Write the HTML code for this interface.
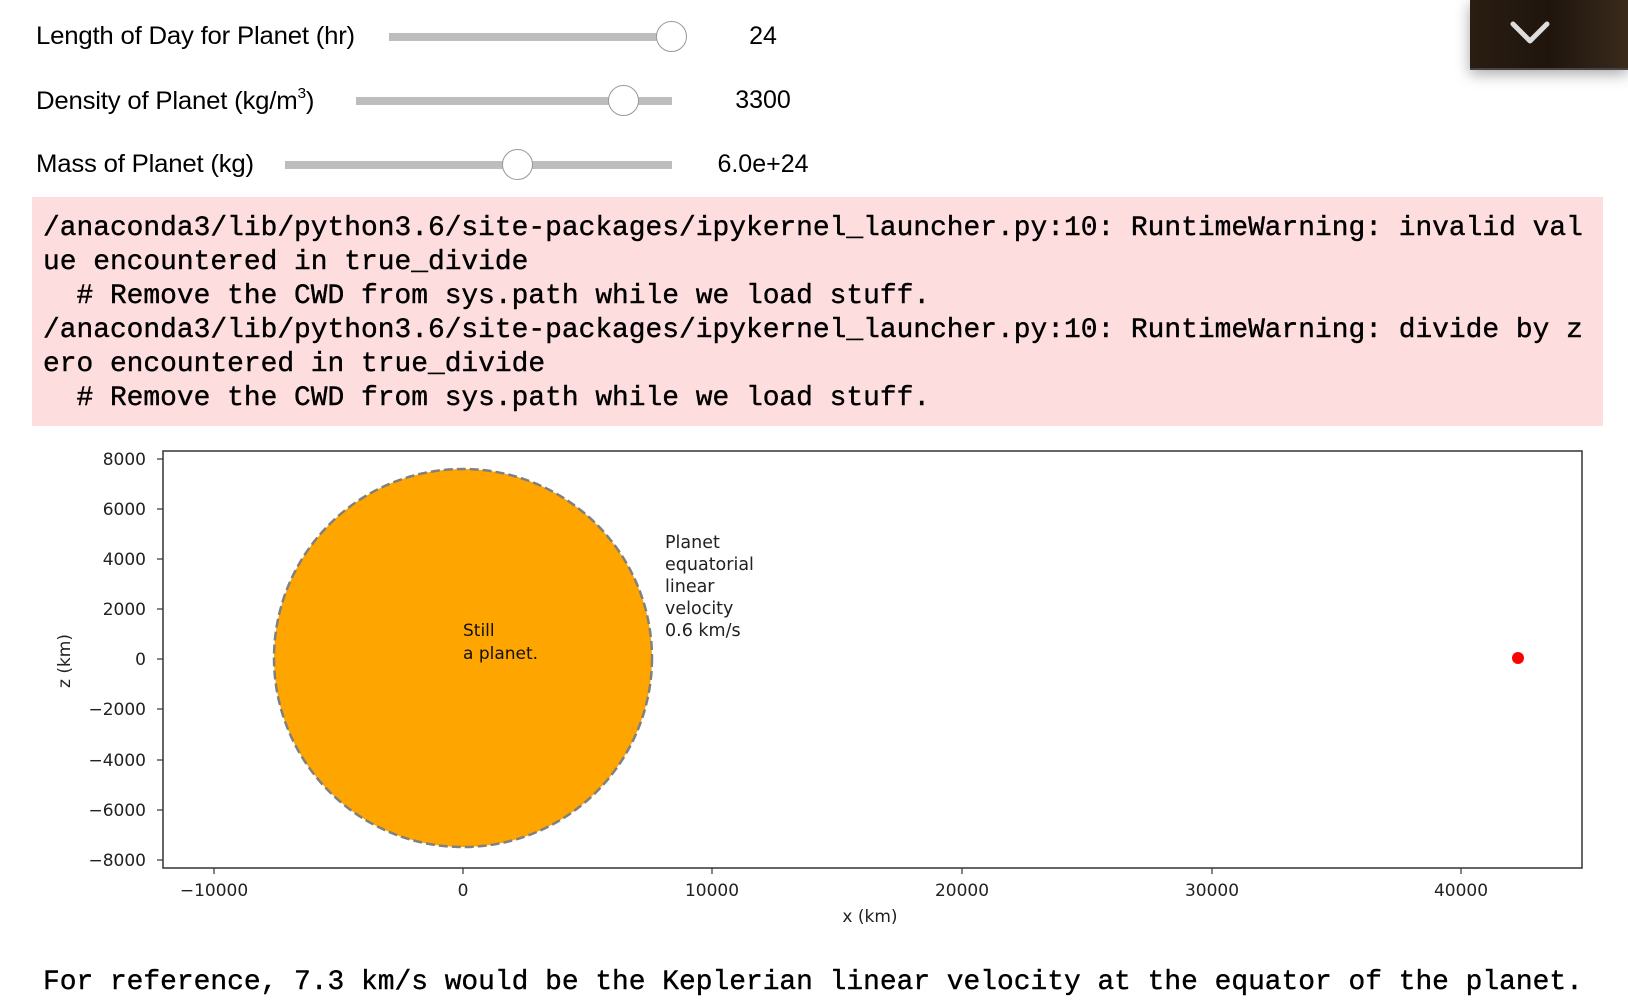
<!DOCTYPE html>
<html><head><meta charset="utf-8"><style>
html,body{margin:0;padding:0;background:#fff;width:1628px;height:1008px;overflow:hidden;position:relative}
.lbl{position:absolute;font-family:"Liberation Sans",Arial,sans-serif;font-size:25px;color:#000;transform:scaleX(1.03);transform-origin:left center;letter-spacing:-0.2px}
.val{position:absolute;font-family:"Liberation Sans",Arial,sans-serif;font-size:25px;color:#000;width:120px;text-align:center}
.track{position:absolute;height:8px;background:#bdbdbd}
.knob{position:absolute;width:29px;height:29px;border-radius:50%;background:#fff;border:1.5px solid #999}
.warn{position:absolute;left:32px;top:197px;width:1571px;height:229px;background:#fddddd}
.mono{position:absolute;font-family:"Liberation Mono","Courier New",monospace;font-size:27.9px;line-height:34px;white-space:pre;color:#000;-webkit-text-stroke:0.4px #000}
.chev{position:absolute;left:1470px;top:0;width:158px;height:68px;background:linear-gradient(90deg,#2a1d12,#1f150d 50%,#3a2a1c);box-shadow:0 4px 14px rgba(0,0,0,.35);border-bottom:2px solid #444}
</style></head><body>
<div class="chev"><svg width="158" height="68"><polyline points="43,24 60,41 77,24" fill="none" stroke="#ddd" stroke-width="5" stroke-linecap="round" stroke-linejoin="round"/></svg></div>

<div class="lbl" style="left:36px;top:22px">Length of Day for Planet (hr)</div>
<div class="track" style="left:389px;top:33px;width:283px"></div>
<div class="knob" style="left:656px;top:21px"></div>
<div class="val" style="left:703px;top:22px">24</div>

<div class="lbl" style="left:36px;top:85px">Density of Planet (kg/m<sup style="font-size:15px;vertical-align:11px">3</sup>)</div>
<div class="track" style="left:356px;top:97px;width:316px"></div>
<div class="knob" style="left:608px;top:85px"></div>
<div class="val" style="left:703px;top:86px">3300</div>

<div class="lbl" style="left:36px;top:150px">Mass of Planet (kg)</div>
<div class="track" style="left:285px;top:161px;width:387px"></div>
<div class="knob" style="left:502px;top:149px"></div>
<div class="val" style="left:703px;top:150px">6.0e+24</div>

<div class="warn"></div>
<div class="mono" style="left:43px;top:212px">/anaconda3/lib/python3.6/site-packages/ipykernel_launcher.py:10: RuntimeWarning: invalid val
ue encountered in true_divide
  # Remove the CWD from sys.path while we load stuff.
/anaconda3/lib/python3.6/site-packages/ipykernel_launcher.py:10: RuntimeWarning: divide by z
ero encountered in true_divide
  # Remove the CWD from sys.path while we load stuff.</div>

<svg style="position:absolute;left:0;top:0" width="1628" height="1008" font-family="DejaVu Sans,sans-serif">
<ellipse cx="463" cy="658" rx="189" ry="189" fill="#ffa500" stroke="#808080" stroke-width="2.5" stroke-dasharray="9,4"/>
<rect x="163" y="451" width="1419" height="417" fill="none" stroke="#333" stroke-width="1.5"/>
<circle cx="1518" cy="658" r="6" fill="#f00"/>
<g stroke="#333" stroke-width="1.2">
<line x1="157" y1="459" x2="163" y2="459"/><line x1="157" y1="509" x2="163" y2="509"/><line x1="157" y1="559" x2="163" y2="559"/><line x1="157" y1="609" x2="163" y2="609"/><line x1="157" y1="659" x2="163" y2="659"/><line x1="157" y1="709" x2="163" y2="709"/><line x1="157" y1="760" x2="163" y2="760"/><line x1="157" y1="810" x2="163" y2="810"/><line x1="157" y1="860" x2="163" y2="860"/>
<line x1="214" y1="868" x2="214" y2="874"/><line x1="463" y1="868" x2="463" y2="874"/><line x1="712" y1="868" x2="712" y2="874"/><line x1="962" y1="868" x2="962" y2="874"/><line x1="1212" y1="868" x2="1212" y2="874"/><line x1="1461" y1="868" x2="1461" y2="874"/>
</g>
<g font-size="17" fill="#222" text-anchor="end">
<text x="146" y="465">8000</text><text x="146" y="515">6000</text><text x="146" y="565">4000</text><text x="146" y="615">2000</text><text x="146" y="665">0</text><text x="146" y="715">−2000</text><text x="146" y="766">−4000</text><text x="146" y="816">−6000</text><text x="146" y="866">−8000</text>
</g>
<g font-size="17" fill="#222" text-anchor="middle">
<text x="214" y="896">−10000</text><text x="463" y="896">0</text><text x="712" y="896">10000</text><text x="962" y="896">20000</text><text x="1212" y="896">30000</text><text x="1461" y="896">40000</text>
<text x="870" y="922">x (km)</text>
<text transform="translate(70,661) rotate(-90)">z (km)</text>
</g>
<g font-size="17" fill="#111">
<text x="463" y="636">Still</text><text x="463" y="659">a planet.</text>
</g>
<g font-size="17.5" fill="#222">
<text x="665" y="548">Planet</text><text x="665" y="570">equatorial</text><text x="665" y="592">linear</text><text x="665" y="614">velocity</text><text x="665" y="636">0.6 km/s</text>
</g>
</svg>

<div class="mono" style="left:43px;top:966px">For reference, 7.3 km/s would be the Keplerian linear velocity at the equator of the planet.</div>
</body></html>
